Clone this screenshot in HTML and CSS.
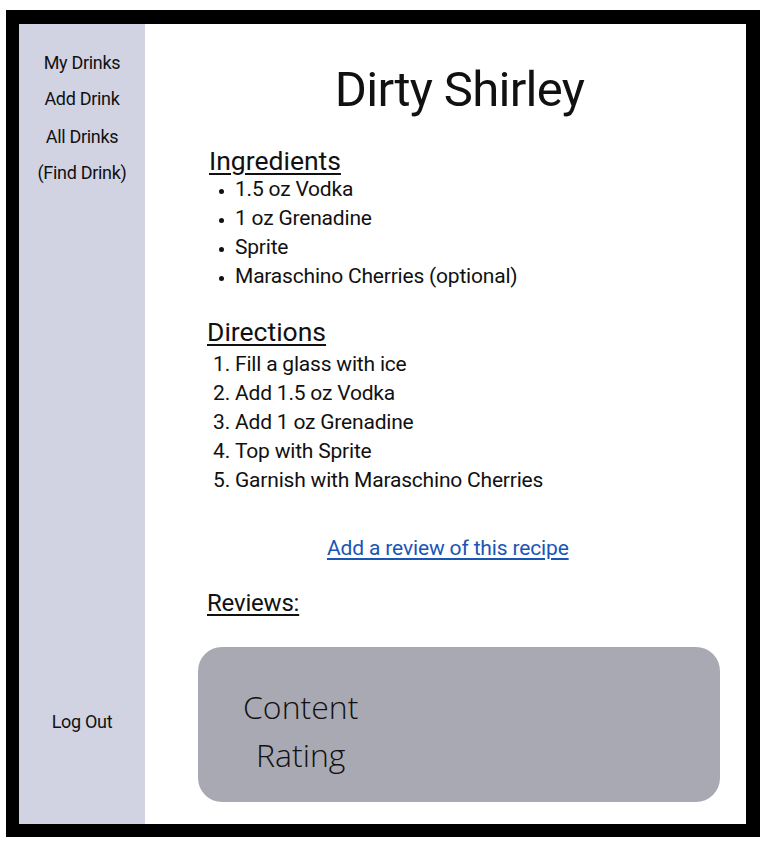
FILE: index.html
```html
<!DOCTYPE html>
<html>
<head>
<meta charset="utf-8">
<link rel="stylesheet" href="styles.css">
</head>
<body>
<div class="frame">
  <nav class="sidebar">
    <div class="nav-top">
      <a class="nav-link">My Drinks</a>
      <a class="nav-link">Add Drink</a>
      <a class="nav-link">All Drinks</a>
      <a class="nav-link">(Find Drink)</a>
    </div>
    <a class="nav-link logout">Log Out</a>
  </nav>
  <main class="main">
    <h1 class="title">Dirty Shirley</h1>
    <h2 class="section-head ing-head">Ingredients</h2>
    <ul class="ing-list">
      <li>1.5 oz Vodka</li>
      <li>1 oz Grenadine</li>
      <li>Sprite</li>
      <li>Maraschino Cherries (optional)</li>
    </ul>
    <h2 class="section-head dir-head">Directions</h2>
    <ol class="dir-list">
      <li>Fill a glass with ice</li>
      <li>Add 1.5 oz Vodka</li>
      <li>Add 1 oz Grenadine</li>
      <li>Top with Sprite</li>
      <li>Garnish with Maraschino Cherries</li>
    </ol>
    <div class="review-link-row"><a class="review-link" href="#">Add a review of this recipe</a></div>
    <h3 class="reviews-head">Reviews:</h3>
    <div class="review-card">
      <div class="review-content">Content</div>
      <div class="review-rating">Rating</div>
    </div>
  </main>
</div>
</body>
</html>
```
FILE: styles.css
```css
html, body {
  margin: 0;
  padding: 0;
  background: #ffffff;
}
body {
  font-family: Roboto, "Liberation Sans", sans-serif;
  color: #111;
}
.frame {
  margin: 10px 0 0 6px;
  width: 727px;
  height: 800px;
  border-style: solid;
  border-color: #000;
  border-width: 14px 14px 13px 13px;
  display: flex;
  background: #fff;
}
.sidebar {
  width: 126px;
  background: #d1d3e3;
  display: flex;
  flex-direction: column;
  justify-content: space-between;
  align-items: center;
  padding: 27px 0 90px;
  box-sizing: border-box;
}
.nav-top {
  display: flex;
  flex-direction: column;
  align-items: center;
  gap: 12px;
}
.nav-link {
  font-size: 18px;
  letter-spacing: -0.3px;
  line-height: 24px;
  color: #111;
}
.nav-top .nav-link:nth-child(3) { margin-top: 2px; }
.main {
  flex: 1;
  padding: 0 25px 0 53px;
  display: flex;
  flex-direction: column;
}
.title {
  margin: 38px 0 0 0;
  text-align: center;
  font-size: 49px;
  font-weight: 400;
  letter-spacing: -0.7px;
  line-height: 56px;
}
.section-head {
  font-size: 26.5px;
  font-weight: 400;
  text-decoration: underline;
  text-decoration-thickness: 1.5px;
  text-underline-offset: 3px;
  letter-spacing: 0;
  line-height: 30px;
  margin: 0;
}
.ing-head { margin: 28px 0 0 11px; }
.dir-head { margin: 26px 0 0 9px; }
.ing-list, .dir-list {
  margin: 0;
  font-size: 21px;
  line-height: 29px;
  letter-spacing: -0.2px;
}
.ing-list {
  padding-left: 37px;
  margin-top: -1px;
}
.ing-list li::marker { font-size: 15px; }
.dir-list {
  padding-left: 37px;
  margin-top: 3px;
}
.dir-list li { padding-left: 0; }
.review-link-row {
  margin-top: 39px;
  padding-left: 129px;
  text-align: left;
  line-height: 28px;
}
.review-link {
  font-size: 21px;
  letter-spacing: -0.15px;
  color: #1a55b5;
  text-decoration: underline;
  text-decoration-thickness: 1.5px;
  text-underline-offset: 3px;
}
.reviews-head {
  margin: 24px 0 0 9px;
  font-size: 24px;
  font-weight: 400;
  letter-spacing: -0.2px;
  line-height: 30px;
  text-decoration: underline;
  text-decoration-thickness: 1.5px;
  text-underline-offset: 3px;
}
.review-card {
  margin-top: 29px;
  height: 155px;
  margin-right: 1px;
  background: #a9a9b3;
  border-radius: 24px;
  padding: 36px 0 0 45px;
  box-sizing: border-box;
  font-family: "Open Sans", sans-serif;
  font-weight: 300;
  font-size: 32px;
  line-height: 48px;
  color: #111;
}
.review-rating { padding-left: 13px; }
```
